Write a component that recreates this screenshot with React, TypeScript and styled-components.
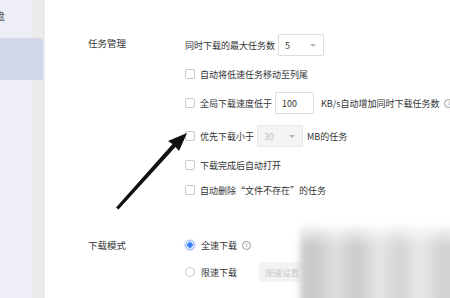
import React from "react";
import styled, { createGlobalStyle } from "styled-components";

const GlobalStyle = createGlobalStyle`
  html, body {
    margin: 0;
    padding: 0;
    background: #ffffff;
  }
  body {
    font-family: "Noto Sans CJK SC", "Noto Sans", sans-serif;
    color: #333;
    overflow: hidden;
  }
`;

const Page = styled.div`
  position: relative;
  width: 450px;
  height: 298px;
  display: flex;
  overflow: hidden;
`;

const Sidebar = styled.div`
  width: 45px;
  flex-shrink: 0;
  height: 100%;
  background: linear-gradient(90deg, #eeeef6 33px, #ebebeb 33px);
  display: flex;
  flex-direction: column;
  overflow: hidden;
`;

const SideItem = styled.div<{ $active?: boolean; $h: number }>`
  height: ${(p) => p.$h}px;
  width: ${(p) => (p.$active ? "43px" : "33px")};
  background: ${(p) => (p.$active ? "#d2d7e9" : "transparent")};
  font-size: 10px;
  line-height: ${(p) => p.$h}px;
  color: #555;
  text-indent: -5px;
  overflow: hidden;
  flex-shrink: 0;
`;

const Content = styled.div`
  flex: 1;
  min-width: 0;
  padding: 34px 0 0 43px;
  display: flex;
  flex-direction: column;
  row-gap: 41px;
`;

const Section = styled.div`
  display: grid;
  grid-template-columns: 97px 1fr;
`;

const Label = styled.div<{ $top: number }>`
  font-size: 9.5px;
  color: #333;
  padding-top: ${(p) => p.$top}px;
  line-height: 14px;
`;

const Options = styled.div<{ $gap: number }>`
  display: flex;
  flex-direction: column;
  row-gap: ${(p) => p.$gap}px;
`;

const Row = styled.div<{ $tall?: boolean }>`
  height: ${(p) => (p.$tall ? "22px" : "14px")};
  display: flex;
  align-items: center;
  font-size: 9px;
  white-space: nowrap;
  color: #333;
`;

const Check = styled.span`
  width: 8px;
  height: 8px;
  border: 1px solid #cacaca;
  border-radius: 2px;
  background: #fff;
  margin-right: 5px;
  flex-shrink: 0;
`;

const Radio = styled.span<{ $on?: boolean }>`
  width: 8px;
  height: 8px;
  border-radius: 50%;
  border: 1px solid ${(p) => (p.$on ? "#8fb6f5" : "#c8c8c8")};
  background: ${(p) =>
    p.$on ? "radial-gradient(circle, #3d7ff0 0 2.5px, #e3edfd 3px)" : "#fff"};
  box-shadow: ${(p) => (p.$on ? "0 0 0 1.5px #e6effd" : "none")};
  margin-right: 6px;
  flex-shrink: 0;
`;

const Box = styled.div<{ $w: number; $disabled?: boolean }>`
  width: ${(p) => p.$w}px;
  height: 22px;
  box-sizing: border-box;
  border: 1px solid ${(p) => (p.$disabled ? "#e8e8e8" : "#dcdcdc")};
  border-radius: 2px;
  background: ${(p) => (p.$disabled ? "#f4f4f4" : "#fff")};
  color: ${(p) => (p.$disabled ? "#c2c2c2" : "#333")};
  display: flex;
  align-items: center;
  justify-content: space-between;
  padding: 0 6px;
  font-size: 9px;
  margin: 0 ${(p) => (p.$disabled ? 4 : 7)}px 0 3px;
`;

const Caret = styled.span`
  width: 0;
  height: 0;
  border-left: 3px solid transparent;
  border-right: 3px solid transparent;
  border-top: 3px solid #b5b5b5;
  margin-right: 1px;
`;

const Info = styled.span`
  width: 7px;
  height: 7px;
  border-radius: 50%;
  border: 1px solid #999;
  color: #888;
  font-size: 6px;
  line-height: 7px;
  text-align: center;
  margin-left: 5px;
  flex-shrink: 0;
  font-family: "Liberation Serif", serif;
`;

const Ghost = styled.div`
  width: 44px;
  height: 20px;
  margin-left: 22px;
  background: #f3f3f3;
  border-radius: 2px;
  color: #c8c8c8;
  font-size: 8.5px;
  line-height: 20px;
  padding-left: 6px;
`;

const Mosaic = styled.div`
  position: absolute;
  left: 300px;
  top: 226px;
  width: 160px;
  height: 80px;
  background:
    linear-gradient(180deg, rgba(255, 255, 255, 0.8) 0%, rgba(255, 255, 255, 0) 25%),
    linear-gradient(
      90deg,
      #cdcdcd 0%,
      #c9c9c9 10%,
      #e0e0e0 22%,
      #cbcbcb 35%,
      #e6e6e6 50%,
      #d3d3d3 62%,
      #eaeaea 75%,
      #d0d0d0 90%,
      #dcdcdc 100%
    );
  filter: blur(3px);
`;

const Arrow = styled.svg`
  position: absolute;
  left: 0;
  top: 0;
  pointer-events: none;
`;

export default function App() {
  return (
    <>
      <GlobalStyle />
      <Page>
        <Sidebar>
          <SideItem $h={32}>盘</SideItem>
          <SideItem $h={6} />
          <SideItem $h={42} $active />
        </Sidebar>
        <Content>
          <Section>
            <Label $top={2}>任务管理</Label>
            <Options $gap={11}>
              <Row $tall>
                同时下载的最大任务数
                <Box $w={46}>
                  5<Caret />
                </Box>
              </Row>
              <Row>
                <Check />
                自动将低速任务移动至列尾
              </Row>
              <Row $tall>
                <Check />
                全局下载速度低于
                <Box $w={39}>100</Box>
                KB/s自动增加同时下载任务数
                <Info>i</Info>
              </Row>
              <Row $tall>
                <Check />
                优先下载小于
                <Box $w={46} $disabled>
                  30
                  <Caret />
                </Box>
                MB的任务
              </Row>
              <Row>
                <Check />
                下载完成后自动打开
              </Row>
              <Row>
                <Check />
                自动删除“文件不存在”的任务
              </Row>
            </Options>
          </Section>
          <Section>
            <Label $top={0}>下载模式</Label>
            <Options $gap={13}>
              <Row>
                <Radio $on />
                全速下载
                <Info>i</Info>
              </Row>
              <Row>
                <Radio />
                限速下载
                <Ghost>限速设置</Ghost>
              </Row>
            </Options>
          </Section>
        </Content>
        <Mosaic />
        <Arrow width="450" height="298" viewBox="0 0 450 298">
          <polygon
            points="187,133 179,151 175.5,147 118.5,209.5 116,207.5 172.5,144 168,141"
            fill="#111"
          />
        </Arrow>
      </Page>
    </>
  );
}
